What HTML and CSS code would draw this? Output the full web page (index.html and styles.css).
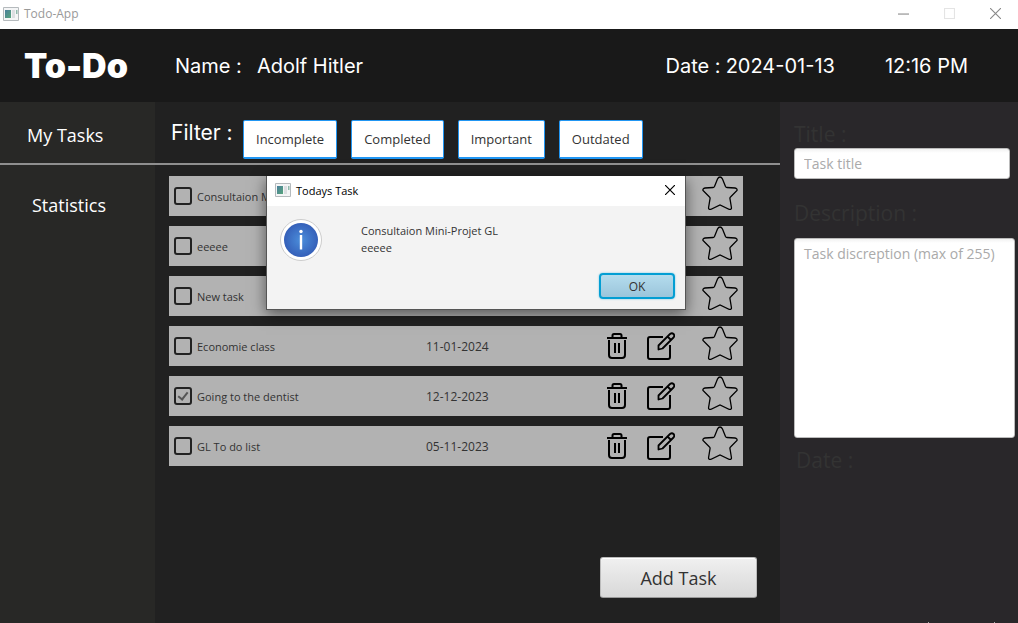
FILE: index.html
```html
<!DOCTYPE html>
<html lang="en">
<head>
<meta charset="utf-8">
<title>Todo-App</title>
<link rel="stylesheet" href="styles.css">
</head>
<body>
<svg class="defs" aria-hidden="true">
  <defs>
    <linearGradient id="pane" x1="0" y1="0" x2="1" y2="1"><stop offset="0" stop-color="#4a7f9b"/><stop offset="1" stop-color="#58a57c"/></linearGradient>
    <radialGradient id="blue"><stop offset="0" stop-color="#4b8edb"/><stop offset="1" stop-color="#3560b9"/></radialGradient>
  </defs>
  <symbol id="app" viewBox="0 0 16 14"><path d="M.5.5h15v13H.5z" fill="#f4f5f6" stroke="#b5babd"/><path d="M2 3h6v8H2z" fill="url(#pane)"/><path d="M9 3h3v8H9z" fill="#dcdfe2"/><path d="M13 3h1.500v4H13z" fill="#8fb9ac"/></symbol>
  <symbol id="trash" viewBox="0 0 20 28"><g fill="none" stroke="#000" stroke-width="2"><path d="M0 6h20M5.500 6V3.500Q5.500 2 7 2h6q1.500 0 1.500 1.500V6M2 8v15q0 3 3 3h10q3 0 3-3V8"/><path d="M8 11v10M12 11v10"/></g></symbol>
  <symbol id="edit" viewBox="0 0 28 28"><path d="M16 5H3Q1 5 1 7v18q0 2 2 2h18q2 0 2-2V13" fill="none" stroke="#000" stroke-width="2"/><path d="M11.500 17.500v-4L23 2q2-1.500 3.500 0t0 3.500L15.500 16.500zM20.500 4.500l3.500 3.500" fill="none" stroke="#000" stroke-width="1.800" stroke-linejoin="round"/></symbol>
  <symbol id="star" viewBox="0 0 36 34"><path d="M18 1q1.500 0 2.500 2l3 7.500q.5 1 1.500 1l8 .5q2.500.5 2 2.500L28.500 21q-.8.700-.5 2l1.500 9q0 1.500-2 1.500L18 29l-9.500 4.500q-2 0-2-1.500L8 23q.3-1.300-.5-2L1 14.500Q.5 12.500 3 12l8-.5q1 0 1.500-1l3-7.500Q16.500 1 18 1z" fill="none" stroke="#000" stroke-width="1.300"/></symbol>
</svg>

<div class="window">
  <div class="titlebar">
    <svg class="app-icon"><use href="#app"/></svg>
    <span class="window-title">Todo-App</span>
    <div class="window-controls">
      <button aria-label="Minimize"><svg viewBox="0 0 10 10"><path d="M0 5.500h10" stroke="#8a8a8a"/></svg></button>
      <button aria-label="Maximize" disabled><svg viewBox="0 0 10 10"><path d="M.5.5h9v9h-9z" fill="none" stroke="#e4e4e4"/></svg></button>
      <button aria-label="Close"><svg viewBox="0 0 10 10"><path d="M0 0l10 10M10 0L0 10" stroke="#888"/></svg></button>
    </div>
  </div>
  <header class="header">
    <h1 class="logo">To-Do</h1>
    <p class="user"><span>Name :</span><span>Adolf Hitler</span></p>
    <p class="today"><span>Date :</span><span>2024-01-13</span></p>
    <time class="clock">12:16 PM</time>
  </header>
  <div class="workspace">
    <nav class="sidebar">
      <a class="nav-link nav-tasks" href="#tasks">My Tasks</a>
      <a class="nav-link nav-stats" href="#statistics">Statistics</a>
    </nav>
    <main class="main" id="tasks">
      <div class="filters">
        <span class="filter-title">Filter :</span>
        <button class="filter">Incomplete</button>
        <button class="filter">Completed</button>
        <button class="filter">Important</button>
        <button class="filter">Outdated</button>
      </div>
      <ul class="tasks">
        <li class="task"><label><input type="checkbox">Consultaion Mini-Projet GL</label><time>13-01-2024</time><button aria-label="Delete"><svg class="trash"><use href="#trash"/></svg></button><button aria-label="Edit"><svg class="edit"><use href="#edit"/></svg></button><button class="mark" aria-label="Mark important"><svg class="star"><use href="#star"/></svg></button></li>
        <li class="task"><label><input type="checkbox">eeeee</label><time>13-01-2024</time><button aria-label="Delete"><svg class="trash"><use href="#trash"/></svg></button><button aria-label="Edit"><svg class="edit"><use href="#edit"/></svg></button><button class="mark" aria-label="Mark important"><svg class="star"><use href="#star"/></svg></button></li>
        <li class="task"><label><input type="checkbox">New task</label><time>12-01-2024</time><button aria-label="Delete"><svg class="trash"><use href="#trash"/></svg></button><button aria-label="Edit"><svg class="edit"><use href="#edit"/></svg></button><button class="mark" aria-label="Mark important"><svg class="star"><use href="#star"/></svg></button></li>
        <li class="task"><label><input type="checkbox">Economie class</label><time>11-01-2024</time><button aria-label="Delete"><svg class="trash"><use href="#trash"/></svg></button><button aria-label="Edit"><svg class="edit"><use href="#edit"/></svg></button><button class="mark" aria-label="Mark important"><svg class="star"><use href="#star"/></svg></button></li>
        <li class="task"><label><input type="checkbox" checked>Going to the dentist</label><time>12-12-2023</time><button aria-label="Delete"><svg class="trash"><use href="#trash"/></svg></button><button aria-label="Edit"><svg class="edit"><use href="#edit"/></svg></button><button class="mark" aria-label="Mark important"><svg class="star"><use href="#star"/></svg></button></li>
        <li class="task"><label><input type="checkbox">GL To do list</label><time>05-11-2023</time><button aria-label="Delete"><svg class="trash"><use href="#trash"/></svg></button><button aria-label="Edit"><svg class="edit"><use href="#edit"/></svg></button><button class="mark" aria-label="Mark important"><svg class="star"><use href="#star"/></svg></button></li>
      </ul>
      <button class="add">Add Task</button>
    </main>
    <aside class="panel">
      <label class="field-label" for="title">Title :</label>
      <input class="field title-field" id="title" type="text" placeholder="Task title">
      <label class="field-label description-label" for="description">Description :</label>
      <textarea class="field description-field" id="description" placeholder="Task discreption (max of 255)"></textarea>
      <span class="field-label date-label">Date :</span>
      <div class="marks"><i></i><i></i></div>
    </aside>
  </div>
</div>

<dialog class="dialog" open aria-labelledby="dialog-title">
  <div class="dialog-bar">
    <svg class="app-icon"><use href="#app"/></svg>
    <h2 id="dialog-title">Todays Task</h2>
    <button class="dialog-close" aria-label="Close"><svg viewBox="0 0 10 10"><path d="M0 0l10 10M10 0L0 10" stroke="#000" stroke-width="1.200"/></svg></button>
  </div>
  <div class="dialog-body">
    <svg class="info" viewBox="0 0 42 42"><circle cx="21" cy="21" r="20.500" fill="#fff" stroke="#ccc"/><circle cx="21" cy="21" r="17" fill="url(#blue)"/><path d="M21 16v14.500" stroke="#fff" stroke-width="2.400"/><circle cx="21" cy="12.500" r="1.700" fill="#fff"/></svg>
    <p>Consultaion Mini-Projet GL<br>eeeee</p>
  </div>
  <button class="ok">OK</button>
</dialog>
</body>
</html>
```
FILE: styles.css
```css
* { box-sizing: border-box; }

body {
  margin: 0;
  font: 12px "Open Sans", "Noto Sans", sans-serif;
  color: #333;
  background: #212121;
}

h1, h2, p, ul { margin: 0; padding: 0; }
button, input, textarea { font: inherit; color: inherit; }
button { padding: 0; border: 0; background: none; }
svg { display: block; }
.defs { position: absolute; width: 0; height: 0; }

.window {
  display: flex;
  flex-direction: column;
  min-height: 100vh;
}

.titlebar {
  display: flex;
  align-items: center;
  gap: 5px;
  height: 29px;
  padding: 0 17px 2px 3px;
  background: #fff;
  color: #999;
}
.app-icon { width: 16px; height: 14px; }
.window-controls { display: flex; gap: 35px; margin-left: auto; }
.window-controls svg { width: 11px; height: 11px; }

.header {
  display: flex;
  align-items: center;
  height: 73px;
  padding: 0 50px 0 24px;
  background: #191919;
  color: #fff;
  font: 20px/28px Inter, sans-serif;
}
.logo { width: 151px; font: 900 34px/38px Inter, sans-serif; }
.user { display: flex; gap: 15px; }
.today { display: flex; gap: 5px; margin-left: auto; }
.clock { margin-left: 50px; }

.workspace { display: flex; flex: 1; }

.sidebar {
  display: flex;
  flex-direction: column;
  width: 155px;
  background: #282826;
}
.nav-link { color: #fff; font-size: 18px; line-height: 28px; text-decoration: none; }
.nav-tasks { height: 63px; padding: 19px 0 0 27px; border-bottom: 2px solid #8f8f8f; }
.nav-stats { padding: 26px 0 0 32px; }

.main { display: flex; flex: 1; flex-direction: column; min-width: 0; }
.filters {
  display: flex;
  gap: 13px;
  height: 63px;
  padding: 18px 16px 0;
  border-bottom: 2px solid #8f8f8f;
}
.filter-title {
  width: 59px;
  color: #fff;
  font: 21px/26px Inter, sans-serif;
  white-space: nowrap;
}
.filter {
  height: 39px;
  padding: 0 12px;
  border: 1px solid #2196f3;
  border-bottom-width: 2px;
  border-radius: 2px;
  background: #fff;
  font-size: 13px;
}
.filter + .filter { margin-left: 1px; }

.tasks {
  display: flex;
  flex-direction: column;
  gap: 10px;
  padding: 11px 37px 0 14px;
  list-style: none;
}
.task {
  display: grid;
  grid-template-columns: 1fr 181px 40px 55px 41px;
  align-items: center;
  justify-items: start;
  height: 40px;
  padding: 0 0 0 5px;
  background: #b2b2b2;
}
.task label { display: flex; align-items: center; gap: 5px; font-size: 11px; }
.task time { font-size: 12px; }
.task input {
  display: grid;
  place-items: center;
  width: 18px;
  height: 18px;
  margin: 0;
  border: 2px solid #222;
  border-radius: 3px;
  appearance: none;
}
.task input:checked::after {
  content: "";
  width: 4px;
  height: 8px;
  margin-bottom: 2px;
  border: solid #555;
  border-width: 0 2px 2px 0;
  transform: rotate(38deg);
}
.trash { width: 20px; height: 28px; }
.edit { width: 28px; height: 28px; }
.star { width: 36px; height: 34px; }
.mark { align-self: start; }

.add {
  align-self: flex-end;
  width: 157px;
  height: 41px;
  margin: auto 23px 25px;
  border: 1px solid #bbb;
  border-bottom-color: #999;
  border-radius: 3px;
  background: linear-gradient(#f0f0f0, #d8d8d8);
  box-shadow: inset 0 1px #fff;
  font-size: 18px;
}

.panel {
  display: flex;
  flex-direction: column;
  width: 238px;
  padding: 18px 3px 0 14px;
  background: #29272a;
}
.field-label { color: #333; font-size: 21px; line-height: 28px; }
.field {
  width: 100%;
  border: 1px solid #bbb;
  border-radius: 3px;
  background: linear-gradient(#f2f2f2, #fff 4px);
  padding: 5px 9px;
  font-size: 14px;
  line-height: 19px;
  resize: none;
}
.field::placeholder { color: #aaa; opacity: 1; }
.title-field { align-self: flex-start; width: calc(100% - 5px); height: 31px; }
.description-label { margin-top: 20px; }
.description-field { height: 200px; margin-top: 11px; }
.date-label { padding: 8px 2px; }
.marks { display: flex; gap: 65px; margin-top: auto; padding-left: 134px; }
.marks i { width: 1px; height: 1px; background: #aaa; }

.dialog {
  position: absolute;
  top: 176px;
  left: 266px;
  width: 420px;
  height: 134px;
  margin: 0;
  padding: 0;
  border: 1px solid #555;
  border-top: 0;
  background: #f3f3f3;
  box-shadow: 0 4px 14px #0008;
  color: #333;
}
.dialog-bar {
  display: flex;
  align-items: center;
  gap: 5px;
  height: 30px;
  padding: 0 10px 2px 8px;
  background: #fff;
  color: #000;
}
.dialog-bar h2 { font-size: 11px; font-weight: 400; }
.dialog-close { margin-left: auto; }
.dialog-close svg { width: 10px; height: 10px; }
.dialog-body { display: flex; gap: 39px; padding: 13px 13px 0; }
.dialog-body p { padding-top: 3px; font-size: 11px; line-height: 17px; }
.info { width: 42px; height: 42px; }
.ok {
  position: absolute;
  right: 10px;
  bottom: 10px;
  width: 76px;
  height: 26px;
  border: 2px solid #039ed3;
  border-radius: 4px;
  background: linear-gradient(#b4dced, #9bc5db);
  box-shadow: 0 0 2px #62c3e2;
}
```
